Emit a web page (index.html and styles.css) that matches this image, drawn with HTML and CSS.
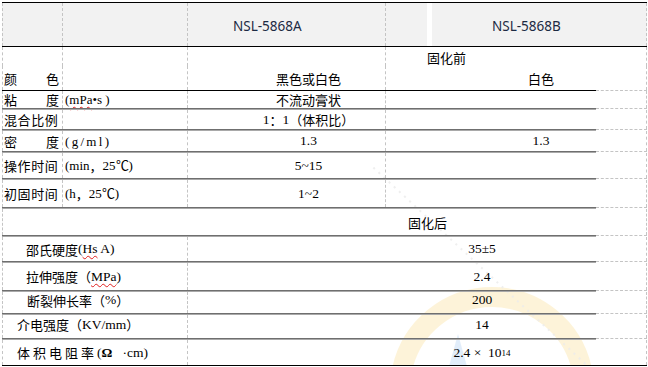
FILE: index.html
```html
<!DOCTYPE html>
<html lang="zh-CN">
<head>
<meta charset="utf-8">
<title>NSL-5868 参数</title>
<link rel="stylesheet" href="styles.css">
</head>
<body>
<div class="sheet">
  <svg class="watermark" width="300" height="250" viewBox="0 0 300 250" aria-hidden="true">
    <path d="M30 250 A 92 92 0 0 1 210 250" fill="none" stroke="#fdf0cf" stroke-width="20" opacity="0.8"/>
    <path d="M76 250 L86 214 L96 250 Z" fill="#d9e9f9" opacity="0.8"/>
    <path d="M-50 0 L220 250" stroke="#ececec" stroke-width="2" stroke-dasharray="2 5" opacity="0.8"/>
  </svg>

  <div class="line-black"></div>
  <div class="row head">
    <div class="c c1"></div>
    <div class="c c2"></div>
    <div class="c c3 hdr-a">NSL-5868A</div>
    <div class="c c4 hdr-b">
      <span class="hb-gap"></span><span class="hb-strip"></span><span class="hb-text">NSL-5868B</span>
    </div>
  </div>
  <div class="line-black"></div>

  <div class="row h19">
    <div class="c c1"></div>
    <div class="c c2"></div>
    <div class="c c3"></div>
    <div class="c c4 pre">固化前</div>
  </div>
  <div class="row h24">
    <div class="c c1 spread"><span>颜</span><span>色</span></div>
    <div class="c c2"></div>
    <div class="c c3 va">黑色或白色</div>
    <div class="c c4 vb">白色</div>
  </div>
  <div class="sep sep-black"><i class="bar"></i><i class="fill"></i></div>

  <div class="row h17">
    <div class="c c1 spread"><span>粘</span><span>度</span></div>
    <div class="c c2 unit">(<span class="wavy">mPa</span>•s )</div>
    <div class="c c3 va">不流动膏状</div>
    <div class="c c4"></div>
  </div>
  <div class="sep"><i class="bar"></i><i class="fill"></i></div>

  <div class="row h19">
    <div class="c c1 lbl">混合比例</div>
    <div class="c c2"></div>
    <div class="c c3 va"><span class="num">1</span>：<span class="num">1</span>（体积比）</div>
    <div class="c c4"></div>
  </div>
  <div class="sep"><i class="bar"></i><i class="fill"></i></div>

  <div class="row h20">
    <div class="c c1 spread"><span>密</span><span>度</span></div>
    <div class="c c2 unit mono">(g/ml)</div>
    <div class="c c3 va num">1.3</div>
    <div class="c c4 vb num">1.3</div>
  </div>
  <div class="sep"><i class="bar"></i><i class="fill"></i></div>

  <div class="row h25">
    <div class="c c1 lbl">操作时间</div>
    <div class="c c2 unit">(min<span class="cjk">，</span>25℃)</div>
    <div class="c c3 va num">5~15</div>
    <div class="c c4"></div>
  </div>
  <div class="sep"><i class="bar"></i><i class="fill"></i></div>

  <div class="row h27">
    <div class="c c1 lbl">初固时间</div>
    <div class="c c2 unit">(h<span class="cjk">，</span>25℃)</div>
    <div class="c c3 va num">1~2</div>
    <div class="c c4"></div>
  </div>
  <div class="sep"><i class="bar"></i><i class="fill"></i></div>

  <div class="row h26">
    <div class="c span post">固化后</div>
  </div>
  <div class="sep"><i class="bar"></i><i class="fill"></i></div>

  <div class="row h24">
    <div class="c b1 ind1">邵氏硬度<span class="ser">(<span class="wavy">Hs</span> A)</span></div>
    <div class="c b2 vc num">35±5</div>
  </div>
  <div class="sep"><i class="bar"></i><i class="fill"></i></div>

  <div class="row h27">
    <div class="c b1 ind1">拉伸强度（<span class="ser"><span class="wavy">MPa</span>)</span></div>
    <div class="c b2 vc num">2.4</div>
  </div>
  <div class="sep"><i class="bar"></i><i class="fill"></i></div>

  <div class="row h21 up3">
    <div class="c b1 ind2">断裂伸长率（<span class="ser">%</span>）</div>
    <div class="c b2 vc num">200</div>
  </div>
  <div class="sep"><i class="bar"></i><i class="fill"></i></div>

  <div class="row h23 up2">
    <div class="c b1 ind3">介电强度（<span class="ser">KV/mm</span>）</div>
    <div class="c b2 vc num">14</div>
  </div>
  <div class="sep"><i class="bar"></i><i class="fill"></i></div>

  <div class="row h25">
    <div class="c b1 ind3"><span class="wide">体积电阻率</span><span class="ser">(<b>Ω</b>&nbsp;&nbsp;&nbsp;·cm)</span></div>
    <div class="c b2 vc num">2.4 ×&nbsp; 10<sup>14</sup></div>
  </div>
  <div class="line-black"></div>
</div>
</body>
</html>
```

FILE: styles.css
```css
* { box-sizing: border-box; }
html, body { margin: 0; padding: 0; background: #fff; }
body {
  font-family: "Noto Sans CJK SC", "Noto Sans", sans-serif;
  font-size: 13px;
  color: #000;
}
.sheet {
  position: relative;
  margin: 2px 0 0 2px;
  width: 645px;
  overflow: hidden;
}
.watermark {
  position: absolute;
  left: 370px;
  top: 118px;
  pointer-events: none;
}
.line-black { height: 1px; background: #000; position: relative; }
.row { display: flex; position: relative; }
.c {
  display: flex;
  align-items: center;
  border-left: 1px dashed #c4c4c4;
  white-space: nowrap;
  line-height: 1;
}
.c1 { width: 60px; padding: 0 3px 0 1px; }
.c2 { width: 125px; }
.c3 { width: 198px; }
.c4 { flex: 1; border-right: 1px dashed #c4c4c4; }
.b1 { width: 185px; }
.b2 { flex: 1; border-right: 1px dashed #c4c4c4; }
.span { flex: 1; border-right: 1px dashed #c4c4c4; }

.head { height: 43px; background: #f2f2f2; }
.head .c { padding-top: 5px; }
.hdr-a, .hb-text {
  font-family: "Noto Sans", "Open Sans", sans-serif;
  font-size: 13.5px;
  color: #1c2a43;
}
.hdr-a { padding-left: 45px; }
.hdr-b { padding-top: 0 !important; align-items: stretch; }
.hb-gap { width: 41px; }
.hb-strip { width: 5px; background: #fff; }
.hb-text { display: flex; align-items: center; padding: 5px 0 0 60px; }

.h17 { height: 17px; }
.h19 { height: 19px; }
.h20 { height: 20px; }
.h21 { height: 21px; }
.h23 { height: 23px; }
.h24 { height: 24px; }
.h25 { height: 25px; }
.h26 { height: 26px; }
.h27 { height: 27px; }
.up3 .c { padding-bottom: 5px; }
.up2 .c { padding-bottom: 4px; }

.spread { justify-content: space-between; }
.lbl { letter-spacing: 0.6px; padding-left: 1px; }
.pre { padding-left: 41px; padding-top: 1px; }
.post { padding-left: 405px; }
.va { justify-content: center; padding-left: 44px; }
.vb { justify-content: center; padding-left: 50px; }
.vc { justify-content: center; padding-left: 130px; }

.unit {
  font-family: "Liberation Serif", serif;
  font-size: 13px;
  padding-left: 2px;
}
.mono { letter-spacing: 2.3px; }
.cjk { font-family: "Noto Sans CJK SC", sans-serif; }
.num { font-family: "Liberation Serif", "Noto Sans CJK SC", serif; font-size: 13.5px; }
.ser { font-family: "Liberation Serif", serif; font-size: 13.5px; }
.wavy {
  text-decoration: underline wavy #e02020;
  text-decoration-thickness: 1px;
  text-underline-offset: 2px;
}
.ind1 { padding-left: 23px; }
.ind2 { padding-left: 24px; }
.ind3 { padding-left: 14px; }
.wide { letter-spacing: 3px; }
sup { font-size: 9px; line-height: 0; vertical-align: 4px; }

.sep { display: flex; height: 2px; position: relative; }
.sep .bar {
  width: 594px;
  background: linear-gradient(#6f6f6f 50%, #a9a9a9 50%);
}
.sep .fill { flex: 1; border-top: 1px dashed #c4c4c4; }
.sep-black { height: 1px; }
.sep-black .bar { background: #000; }
```
